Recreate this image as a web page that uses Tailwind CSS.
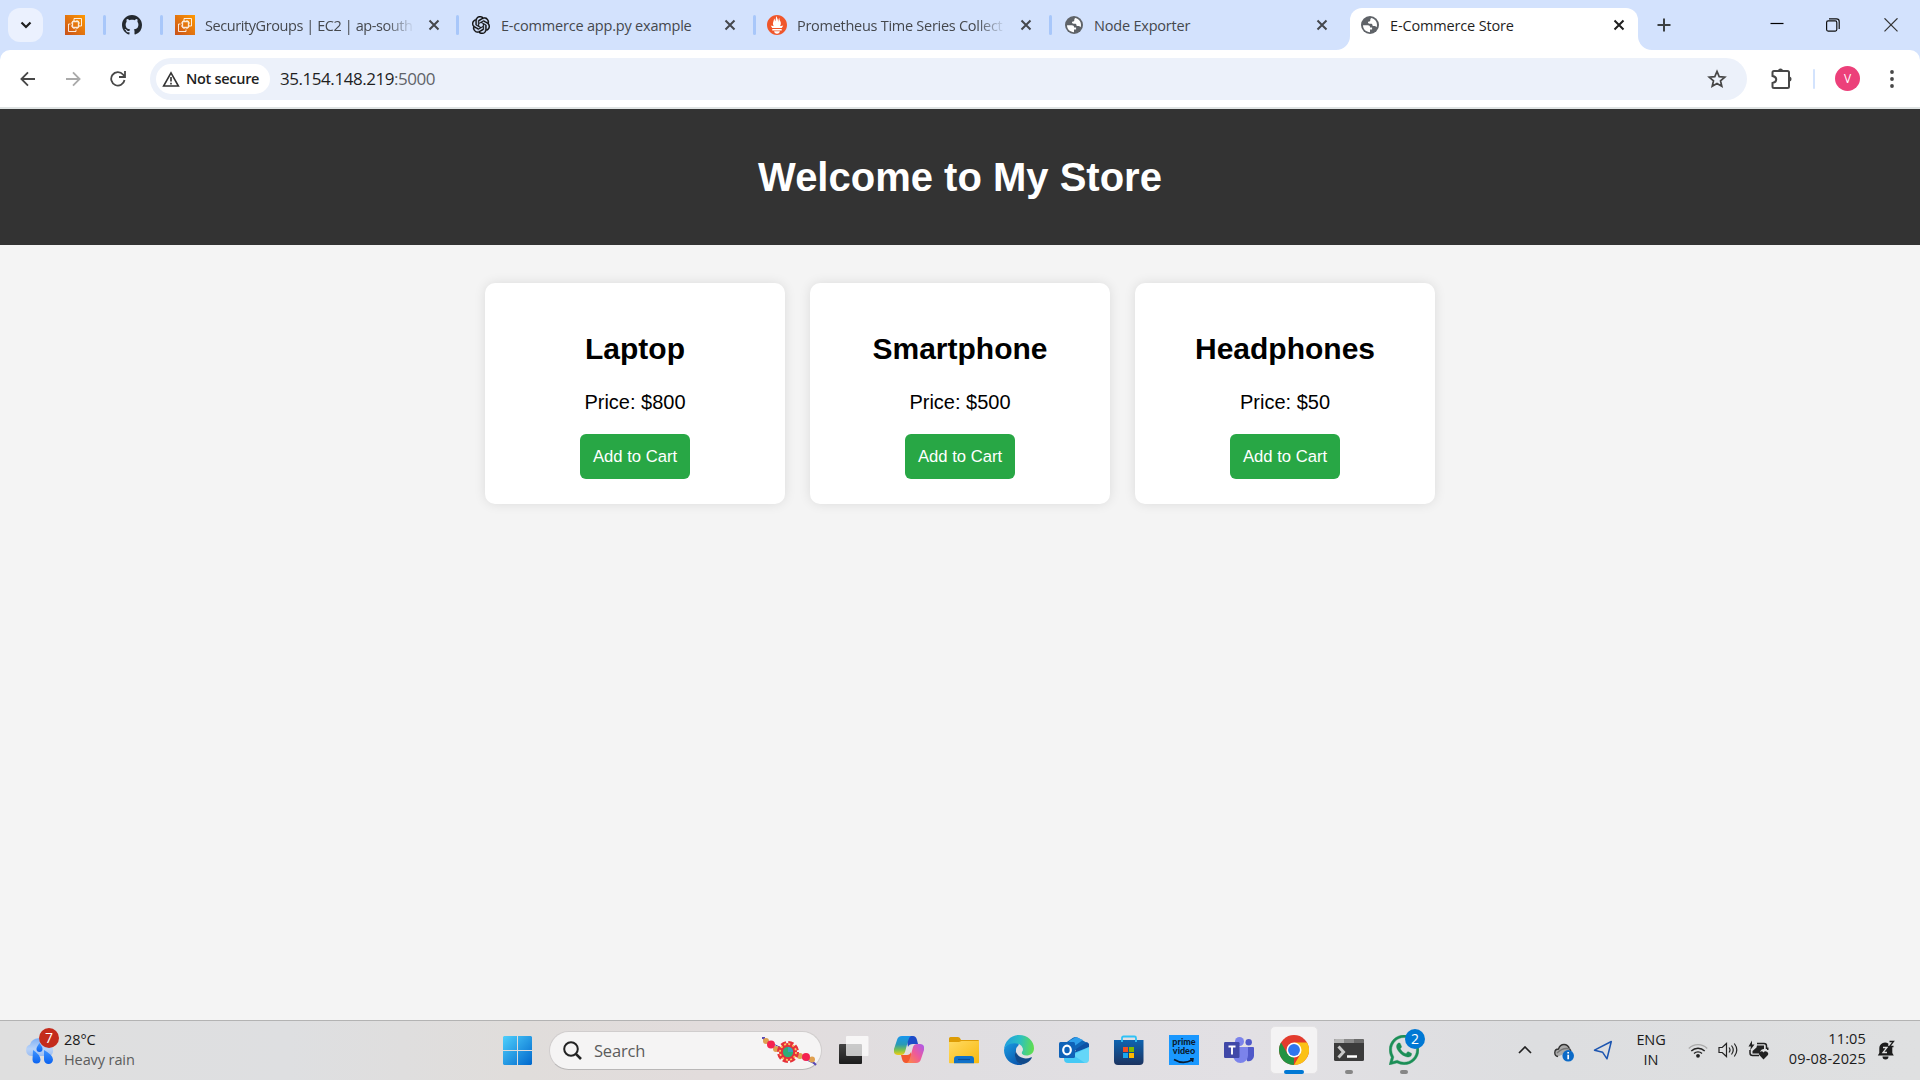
<!DOCTYPE html>
<html lang="en">
<head>
<meta charset="utf-8">
<title>E-Commerce Store</title>
<script src="https://cdn.jsdelivr.net/npm/@tailwindcss/browser@4"></script>
</head>
<body class="w-[1920px] h-[1080px] overflow-hidden flex flex-col bg-[#f4f4f4] font-['Open_Sans','Noto_Sans',sans-serif]">
<svg width="0" height="0" class="absolute">
  <defs>
    <linearGradient id="aws" x1="0" y1="1" x2="1" y2="0"><stop stop-color="#c8511b"/><stop offset="1" stop-color="#f90"/></linearGradient>
    <symbol id="ec2" viewBox="0 0 20 20"><path fill="url(#aws)" d="M0 0h20v20H0z"/><g fill="none" stroke="#fff" stroke-opacity=".85" stroke-width="1"><path d="M9 5.500V3.500h7.500v7.500h-2M5.500 9H3.500v7.500h7.500v-2"/><rect x="7.500" y="6.500" width="6" height="6" rx=".5" stroke-width="1.300"/><path d="M9 5v1M12 5v1M9 13v1M12 13v1M6 8h1M6 11h1M14 8h1M14 11h1"/></g></symbol>
    <symbol id="x" viewBox="0 0 12 12"><path d="M1.500 1.500l9 9M10.500 1.500l-9 9" stroke="currentColor" stroke-width="2" fill="none"/></symbol>
    <symbol id="globe" viewBox="0 0 18 18"><circle cx="9" cy="9" r="9" fill="#5f6368"/><path fill="#fff" d="M2 9.300h4.800c1.500 0 2.300.9 2.300 2.100h2v2.200H9v2.600c-3.900 0-7-3-7-6.900zM10 2.100c3.400.5 6 3.300 6 6.900 0 .9-.2 1.600-.5 2.300-.6-.9-1.300-1.200-2.300-1.200-1.400 0-1.900-.7-1.900-1.700 0-.5-.3-.7-.9-.7H8.500c-.9 0-1.500-.5-1.500-1.200s.6-1 1.200-1c1.300 0 1.100-1.300 1.100-2z"/></symbol>
  </defs>
</svg>

<!-- tab strip -->
<header class="h-[50px] shrink-0 bg-[#d3e2fd] flex text-[14.5px] tracking-[-0.2px] text-[#45484d]">
  <div class="w-[159px] shrink-0 flex items-center pl-2">
    <div class="w-[35px] h-[34px] rounded-xl bg-[#ebf1fe] flex items-center justify-center"><svg class="w-3 h-2" viewBox="0 0 12 8"><path d="M1.500 1.500L6 6l4.500-4.500" fill="none" stroke="#1f1f1f" stroke-width="2.200"/></svg></div>
    <svg class="w-5 h-5 ml-[22px]"><use href="#ec2"/></svg>
    <i class="w-[3px] h-5 rounded bg-[#a8c7fa] ml-[18px]"></i>
    <svg class="w-5 h-5 ml-4" viewBox="0 0 16 16" fill="#24292f"><path d="M8 0C3.580 0 0 3.580 0 8c0 3.540 2.290 6.530 5.470 7.590.4.070.55-.17.55-.38 0-.19-.01-.82-.01-1.490-2.010.37-2.530-.49-2.690-.94-.09-.23-.48-.94-.82-1.130-.28-.15-.68-.52-.01-.53.63-.01 1.080.58 1.230.82.72 1.210 1.870.87 2.330.66.070-.52.28-.87.51-1.070-1.780-.2-3.640-.89-3.640-3.950 0-.87.31-1.590.82-2.150-.08-.2-.36-1.020.08-2.120 0 0 .67-.21 2.200.82.64-.18 1.320-.27 2-.27s1.360.09 2 .27c1.530-1.040 2.200-.82 2.200-.82.44 1.100.16 1.920.08 2.120.51.56.82 1.270.82 2.150 0 3.070-1.870 3.750-3.650 3.950.29.25.54.73.54 1.480 0 1.070-.01 1.930-.01 2.200 0 .21.15.46.55.38A8.010 8.010 0 0 0 16 8c0-4.420-3.580-8-8-8z"/></svg>
  </div>
  <div class="w-[297px] shrink-0 flex items-center">
    <i class="w-[3px] h-5 rounded bg-[#a8c7fa] ml-px"></i>
    <svg class="w-5 h-5 ml-[12px]"><use href="#ec2"/></svg>
    <span class="ml-[10px] pt-0.5 w-[210px] whitespace-nowrap tracking-[-0.42px] [mask-image:linear-gradient(to_right,black_86%,transparent)]">SecurityGroups | EC2 | ap-south</span>
    <svg class="w-3 h-3 ml-[13px]"><use href="#x"/></svg>
  </div>
  <div class="w-[297px] shrink-0 flex items-center">
    <i class="w-[3px] h-5 rounded bg-[#a8c7fa]"></i>
    <svg class="w-[18px] h-[18px] ml-[13px]" viewBox="0 0 24 24" fill="#0d0d0d" stroke="#0d0d0d" stroke-width=".4"><path d="M22.2819 9.8211a5.9847 5.9847 0 0 0-.5157-4.9108 6.0462 6.0462 0 0 0-6.5098-2.9A6.0651 6.0651 0 0 0 4.9807 4.1818a5.9847 5.9847 0 0 0-3.9977 2.9 6.0462 6.0462 0 0 0 .7427 7.0966 5.98 5.98 0 0 0 .511 4.9107 6.051 6.051 0 0 0 6.5146 2.9001A5.9847 5.9847 0 0 0 13.2599 24a6.0557 6.0557 0 0 0 5.7718-4.2058 5.9894 5.9894 0 0 0 3.9977-2.9001 6.0557 6.0557 0 0 0-.7475-7.0729zm-9.022 12.6081a4.4755 4.4755 0 0 1-2.8764-1.0408l.1419-.0804 4.7783-2.7582a.7948.7948 0 0 0 .3927-.6813v-6.7369l2.02 1.1686a.071.071 0 0 1 .038.052v5.5826a4.504 4.504 0 0 1-4.4945 4.4944zm-9.6607-4.1254a4.4708 4.4708 0 0 1-.5346-3.0137l.142.0852 4.783 2.7582a.7712.7712 0 0 0 .7806 0l5.8428-3.3685v2.3324a.0804.0804 0 0 1-.0332.0615L9.74 19.9502a4.4992 4.4992 0 0 1-6.1408-1.6464zM2.3408 7.8956a4.485 4.485 0 0 1 2.3655-1.9728V11.6a.7664.7664 0 0 0 .3879.6765l5.8144 3.3543-2.0201 1.1685a.0757.0757 0 0 1-.071 0l-4.8303-2.7865A4.504 4.504 0 0 1 2.3408 7.872zm16.5963 3.8558L13.1038 8.364 15.1192 7.2a.0757.0757 0 0 1 .071 0l4.8303 2.7913a4.4944 4.4944 0 0 1-.6765 8.1042v-5.6772a.79.79 0 0 0-.407-.667zm2.0107-3.0231l-.142-.0852-4.7735-2.7818a.7759.7759 0 0 0-.7854 0L9.409 9.2297V6.8974a.0662.0662 0 0 1 .0284-.0615l4.8303-2.7866a4.4992 4.4992 0 0 1 6.6802 4.66zM8.3065 12.863l-2.02-1.1638a.0804.0804 0 0 1-.038-.0567V6.0742a4.4992 4.4992 0 0 1 7.3757-3.4537l-.142.0805L8.704 5.459a.7948.7948 0 0 0-.3927.6813zm1.0976-2.3654l2.602-1.4998 2.6069 1.4998v2.9994l-2.5974 1.4997-2.6067-1.4997Z"/></svg>
    <span class="ml-[11px] pt-0.5 w-[210px] whitespace-nowrap">E-commerce app.py example</span>
    <svg class="w-3 h-3 ml-[13px]"><use href="#x"/></svg>
  </div>
  <div class="w-[296px] shrink-0 flex items-center">
    <i class="w-[3px] h-5 rounded bg-[#a8c7fa]"></i>
    <svg class="w-5 h-5 ml-[11px]" viewBox="0 0 24 24"><circle cx="12" cy="12" r="11" fill="#fff"/><path fill="#f0562b" d="M12 0C5.373 0 0 5.372 0 12c0 6.627 5.373 12 12 12s12-5.373 12-12c0-6.628-5.373-12-12-12zm0 22.460c-1.885 0-3.414-1.260-3.414-2.814h6.828c0 1.553-1.528 2.813-3.414 2.813zm5.640-3.745H6.360v-2.046h11.280v2.046zm-.04-3.098H6.391c-.037-.043-.075-.086-.111-.13-1.155-1.401-1.427-2.133-1.690-2.879-.005-.025 1.400.287 2.395.511 0 0 .513.119 1.262.255-.72-.843-1.147-1.915-1.147-3.010 0-2.406 1.845-4.508 1.180-6.207.648.053 1.340 1.367 1.387 3.422.689-.951.977-2.690.977-3.755 0-1.103.727-2.385 1.454-2.429-.648 1.069.168 1.984.894 4.256.272.854.237 2.290.447 3.201.070-1.892.395-4.652 1.595-5.605-.529 1.200.079 2.702.494 3.424.671 1.164 1.078 2.047 1.078 3.716a4.642 4.642 0 01-1.110 2.996c.792-.149 1.340-.283 1.340-.283l2.573-.502s-.374 1.538-1.810 3.019z"/></svg>
    <span class="ml-[10px] pt-0.5 w-[209px] whitespace-nowrap tracking-[-0.27px] [mask-image:linear-gradient(to_right,black_86%,transparent)]">Prometheus Time Series Collect</span>
    <svg class="w-3 h-3 ml-[14px]"><use href="#x"/></svg>
  </div>
  <div class="w-[301px] shrink-0 flex items-center">
    <i class="w-[3px] h-5 rounded bg-[#a8c7fa]"></i>
    <svg class="w-[18px] h-[18px] ml-[13px]"><use href="#globe"/></svg>
    <span class="ml-[11px] pt-0.5 w-[208px]">Node Exporter</span>
    <svg class="w-3 h-3 ml-[14px]"><use href="#x"/></svg>
  </div>
  <div class="relative w-[288px] shrink-0 mt-2 h-[42px] pb-2 rounded-t-xl bg-white flex items-center text-[#1f1f1f]">
    <svg class="absolute -left-[14px] bottom-0 w-[14px] h-[14px]" viewBox="0 0 14 14"><path fill="#fff" d="M14 0v14H0A14 14 0 0 0 14 0z"/></svg>
    <svg class="absolute -right-[14px] bottom-0 w-[14px] h-[14px]" viewBox="0 0 14 14"><path fill="#fff" d="M0 0v14h14A14 14 0 0 1 0 0z"/></svg>
    <svg class="w-[18px] h-[18px] ml-[11px]"><use href="#globe"/></svg>
    <span class="ml-[11px] pt-0.5 w-[209px] tracking-[-0.15px]">E-Commerce Store</span>
    <svg class="w-3 h-3 ml-[14px]"><use href="#x"/></svg>
  </div>
  <div class="flex-1 flex items-center">
    <svg class="w-[14px] h-[14px] ml-[19px]" viewBox="0 0 14 14"><path d="M.5 7h13M7 .5v13" stroke="#3c4043" stroke-width="2"/></svg>
    <svg class="w-[14px] h-[14px] ml-[99px]" viewBox="0 0 14 14"><path d="M.5 5.500h13" stroke="#000" stroke-width="1.200"/></svg>
    <svg class="w-[14px] h-[14px] ml-[42px]" viewBox="0 0 14 14" fill="none" stroke="#111" stroke-width="1.200"><rect x=".6" y="2.900" width="10.200" height="10.200" rx="1.500"/><path d="M3 .8h7.500a2.700 2.700 0 0 1 2.700 2.700V11"/></svg>
    <svg class="w-[14px] h-[14px] ml-11" viewBox="0 0 14 14"><path d="M.5.3l13 13M13.500.3l-13 13" stroke="#333" stroke-width="1.200"/></svg>
  </div>
</header>

<!-- toolbar -->
<div class="h-[59px] shrink-0 bg-[#d3e2fd]">
 <div class="h-[59px] bg-white rounded-t-[10px] border-b-2 border-[#dfe3e3] flex items-center">
  <svg class="w-4 h-4 ml-5" viewBox="0 0 16 16" fill="none" stroke="#474747" stroke-width="1.800"><path d="M15 8H1.500M8 1.300L1.400 8 8 14.700"/></svg>
  <svg class="w-4 h-4 ml-[29px]" viewBox="0 0 16 16" fill="none" stroke="#aaa" stroke-width="1.800"><path d="M1 8h13.500M8 1.300L14.600 8 8 14.700"/></svg>
  <svg class="w-4 h-4 ml-[29px]" viewBox="0 0 16 16" fill="none" stroke="#474747" stroke-width="1.800"><path d="M14.500 9A6.700 6.700 0 1 1 13 3.500L14.500 5.300M15 0v6H9"/></svg>
  <div class="ml-[24px] w-[1597px] h-[42px] shrink-0 rounded-full bg-[#ecf1fa] flex items-center pl-1.5">
    <div class="w-[114px] h-[30px] rounded-full bg-white flex items-center pl-1.5">
      <svg class="w-[18px] h-[16px]" viewBox="0 0 18 16"><path d="M9 1.800L16.400 15H1.600z" fill="none" stroke="#333" stroke-width="1.600"/><path d="M9 6v4.500M9 11.800v1.600" stroke="#333" stroke-width="1.600"/></svg>
      <span class="ml-[6px] text-[14.500px] font-semibold tracking-[-0.3px] text-[#1f1f1f] whitespace-nowrap">Not secure</span>
    </div>
    <span class="ml-[10px] pt-px text-[17px] tracking-[-0.45px] text-[#1f1f1f]">35.154.148.219<span class="text-[#5f6368]">:5000</span></span>
    <svg class="w-[20px] h-[20px] ml-auto mr-[20px]" viewBox="0 0 20 20" fill="none" stroke="#474747" stroke-width="1.700"><path d="M10 2.400l2.200 5.200 5.600.5-4.300 3.700 1.300 5.500L10 14.400l-4.800 2.900 1.300-5.500L2.200 8.100l5.600-.5z"/></svg>
  </div>
  <svg class="w-[22px] h-[22px] ml-6 shrink-0" viewBox="0 0 22 22"><path d="M3 4h13.500q1.500 0 1.500 1.500V19.500q0 1.500-1.500 1.500H3q-1.500 0-1.500-1.500V16c5-1 5-6 0-7V5.500Q1.500 4 3 4z" fill="none" stroke="#474747" stroke-width="2" transform="translate(0 -1)"/><path d="M7 3a2.500 2.500 0 0 1 5 0zM18 8.500a2.500 2.500 0 0 1 0 5z" fill="#474747"/></svg>
  <i class="w-[2px] h-5 rounded bg-[#d3e3fd] ml-[20px]"></i>
  <div class="w-[25px] h-[25px] rounded-full bg-[#ec407a] text-white text-[12px] flex items-center justify-center ml-5">V</div>
  <svg class="w-1 h-[18px] ml-[30px]" viewBox="0 0 4 18" fill="#474747"><circle cx="2" cy="2" r="1.900"/><circle cx="2" cy="9" r="1.900"/><circle cx="2" cy="16" r="1.900"/></svg>
 </div>
</div>

<!-- page -->
<main class="flex-1 font-['Liberation_Sans',Arial,sans-serif] text-black">
  <div class="h-[136px] bg-[#333] flex items-center justify-center"><h1 class="text-[40px] font-bold text-white leading-[46px]">Welcome to My Store</h1></div>
  <div class="flex justify-center gap-[25px] pt-[38px] text-center">
    <section class="w-[300px] h-[221px] bg-white rounded-[10px] shadow-[0_0_12px_rgba(0,0,0,0.1)] pt-[49px] flex flex-col items-center">
      <h2 class="text-[30px] font-bold leading-[34px]">Laptop</h2><p class="text-[20px] leading-[23px] mt-[25px]">Price: $800</p>
      <button class="mt-[20px] w-[110px] h-[45px] rounded-[6px] bg-[#28a745] text-white text-[16.67px]">Add to Cart</button>
    </section>
    <section class="w-[300px] h-[221px] bg-white rounded-[10px] shadow-[0_0_12px_rgba(0,0,0,0.1)] pt-[49px] flex flex-col items-center">
      <h2 class="text-[30px] font-bold leading-[34px]">Smartphone</h2><p class="text-[20px] leading-[23px] mt-[25px]">Price: $500</p>
      <button class="mt-[20px] w-[110px] h-[45px] rounded-[6px] bg-[#28a745] text-white text-[16.67px]">Add to Cart</button>
    </section>
    <section class="w-[300px] h-[221px] bg-white rounded-[10px] shadow-[0_0_12px_rgba(0,0,0,0.1)] pt-[49px] flex flex-col items-center">
      <h2 class="text-[30px] font-bold leading-[34px]">Headphones</h2><p class="text-[20px] leading-[23px] mt-[25px]">Price: $50</p>
      <button class="mt-[20px] w-[110px] h-[45px] rounded-[6px] bg-[#28a745] text-white text-[16.67px]">Add to Cart</button>
    </section>
  </div>
</main>

<!-- taskbar -->
<footer class="h-[60px] shrink-0 border-t border-[#b3b3b3] bg-[linear-gradient(to_right,#dfdfdf,#dedfe1_15%,#e0dddb_27%,#e2dcdc_37%,#e0dee1_50%,#e2e0e4_65%,#dddee0_80%,#dfe0e1)] flex items-center text-[#1b1b1b]">
  <div class="w-[503px] shrink-0 flex items-center pl-[25px]">
    <div class="relative w-[30px] h-[30px]">
      <svg class="w-[30px] h-[30px]" viewBox="0 0 30 30"><defs><linearGradient id="cl" x1="0" y1="0" x2="0" y2="1"><stop stop-color="#7fb0f6"/><stop offset=".6" stop-color="#b9d3f8"/><stop offset="1" stop-color="#9cbdf0"/></linearGradient><linearGradient id="dr" x1="0" y1="0" x2="0" y2="1"><stop stop-color="#3f94ff"/><stop offset="1" stop-color="#0a62f0"/></linearGradient></defs><path fill="url(#cl)" d="M6 20a6 6 0 0 1-1-11.500A9 9 0 0 1 22 8a6.500 6.500 0 0 1 3 12z"/><g fill="url(#dr)"><path d="M14.500 7c2 3 3 4.500 3 6a3 3 0 0 1-6 0c0-1.500 1-3 3-6z"/><path d="M8 14q7.500 5 7.500 9.500a4 4 0 0 1-8 0zM19 14q9 5 9 9.500a4.300 4.300 0 0 1-9 0z"/></g></svg>
      <div class="absolute left-[14px] -top-[8px] w-5 h-5 rounded-full bg-[#c42b1c] text-white text-[14px] leading-5 text-center">7</div>
    </div>
    <div class="ml-[9px] -mt-0.5 text-[14.500px] leading-5 tracking-[-0.1px]"><div>28°C</div><div class="text-[#5c5c5c]">Heavy rain</div></div>
  </div>
  <svg class="w-[29px] h-[29px] shrink-0" viewBox="0 0 29 29"><defs><linearGradient id="wn" x1="0" y1="0" x2="1" y2="1" gradientUnits="userSpaceOnUse" gradientTransform="scale(29)"><stop stop-color="#4fd0fc"/><stop offset="1" stop-color="#0067cc"/></linearGradient></defs><path fill="url(#wn)" d="M1 0h13v14H0V1zM15 0h13l1 1v13H15zM0 15h14v14H1l-1-1zM15 15h14v13l-1 1H15z"/></svg>
  <div class="ml-[17px] w-[273px] h-[39px] shrink-0 rounded-full bg-[#f5f4f4] border border-[#d0cdcd] border-b-[#b9b7b7] flex items-center pl-[13px]">
    <svg class="w-[19px] h-[19px]" viewBox="0 0 19 19" fill="none" stroke="#222" stroke-width="2"><circle cx="8" cy="8" r="6.800"/><path d="M12.800 12.800L18 18" stroke-width="2.600"/></svg>
    <span class="ml-[12px] pt-px text-[16.500px] tracking-[-0.2px] text-[#5c5c5c]">Search</span>
    <svg class="w-[56px] h-[30px] ml-auto mr-[4px]" viewBox="0 0 56 30"><path d="M2 3L54 28" stroke="#5b4bb5" stroke-width="1"/><path d="M1 2h3M52 26l3 3" stroke="#5b4bb5" stroke-width="2"/><g fill="#e0a050"><circle cx="5" cy="5" r="3"/><circle cx="15" cy="13" r="3"/><circle cx="39" cy="20" r="3"/><circle cx="51" cy="23.500" r="3"/></g><circle cx="10" cy="8.500" r="4" fill="#f4224f"/><circle cx="45" cy="21" r="4" fill="#f4224f"/><circle cx="27" cy="16" r="9" fill="#e6303a" stroke="#e6303a" stroke-width="4" stroke-dasharray="5 2.070"/><circle cx="27" cy="16" r="8" fill="none" stroke="#ffc45c" stroke-width="1.800" stroke-dasharray="2 2.190"/><circle cx="27" cy="16" r="5.200" fill="#2fae78"/><path d="M27 11a5 5 0 0 1 5 5h-5z" fill="#3c9fc0"/></svg>
  </div>
  <div class="ml-[17px] flex items-center gap-[25px] shrink-0 -mt-px">
    <svg class="w-[30px] h-[30px]" viewBox="0 0 30 30"><defs><linearGradient id="tv" x1="0" y1="0" x2="0" y2="1"><stop stop-color="#444"/><stop offset="1" stop-color="#1c1c1c"/></linearGradient></defs><rect x="0" y="9" width="23" height="20" rx="1" fill="url(#tv)"/><rect x="7" y="1" width="22.500" height="20" rx="1" fill="#fff" fill-opacity=".72"/></svg>
    <svg class="w-[30px] h-[30px]" viewBox="0 0 30 30"><defs><linearGradient id="ca" x1="0" y1="0" x2="0" y2="1"><stop stop-color="#1796f0"/><stop offset=".45" stop-color="#2a9ab5"/><stop offset=".75" stop-color="#7fc24a"/><stop offset="1" stop-color="#f5cb14"/></linearGradient><linearGradient id="cb" x1="1" y1="0" x2="0" y2="1"><stop stop-color="#a85af0"/><stop offset=".5" stop-color="#ee5a9a"/><stop offset="1" stop-color="#ff8c3c"/></linearGradient></defs><path fill="#1d4bc8" d="M12 1h7q3 0 4 4l1 4h-5q-4 0-5 3z"/><path fill="#f3582f" d="M18 28h-6q-3 0-4-4l-1-4h6q3 0 4-3z"/><path fill="url(#ca)" d="M8 1h9q-2 1-3 5l-3 11q-1 3-4 3H4q-5 0-4-6l3-9q1-4 5-4z"/><path fill="url(#cb)" d="M22 28h-9q2-1 3-5l3-11q1-3 4-3h3q5 0 4 6l-3 9q-1 4-5 4z"/></svg>
    <svg class="w-[30px] h-[30px]" viewBox="0 0 30 30"><defs><linearGradient id="fd" x1="0" y1="0" x2="1" y2="1"><stop stop-color="#ffda62"/><stop offset="1" stop-color="#f8b90e"/></linearGradient></defs><path fill="#dd9c05" d="M0 3.500Q0 2 1.500 2H9q2 0 3 3h17q1 0 1 1v6H0z"/><path fill="url(#fd)" d="M0 7h10l2.500-1H30v21.500q0 .8-.8.8H.8q-.8 0-.8-.8z"/><path fill="#1071c9" d="M5 28.300V24q0-3 3-3h14q3 0 3 3v4.300z"/><path d="M9 24.500h12" stroke="#0b4f96" stroke-width="1.200"/></svg>
    <svg class="w-[30px] h-[30px]" viewBox="0 0 24 24"><defs><linearGradient id="e1" x1="0" y1=".4" x2="1" y2=".5"><stop stop-color="#1f9de0"/><stop offset=".5" stop-color="#2bbfc4"/><stop offset="1" stop-color="#61de4d"/></linearGradient><linearGradient id="e2" x1="0" y1="0" x2=".7" y2="1"><stop stop-color="#1b9de2"/><stop offset="1" stop-color="#0a57ae"/></linearGradient></defs><path fill="url(#e2)" d="M12 7C6 4.500 1 7.500 0 12c0 7 5.500 12 12 12 1 0 2-.1 3-.4C10 22 8 17 9.500 13z"/><path fill="#114a8b" d="M9.500 12.500C7 18 11 24 15.500 23.400c3-.7 5.300-2.500 6.700-5 .3-.6-.2-.8-.8-.5-5 2.300-11.200-.2-11.900-5.400z"/><path fill="url(#e1)" d="M0 12C.3 5.300 5.500 0 12 0c7 0 12 5 12 10.500 0 4-3 5.800-6 5.800-2.500 0-4-1-4-2 0-.8 1-1.200 1-3C15 8.500 12 6.500 8.500 6.500 4 6.500.5 9 0 12z"/><path fill="#e2e0e4" d="M12 8.900c2 .2 3 1.500 3 2.700 0 1.300-.9 1.800-.9 2.700 0 .8.8 1.400 1.800 1.800-4 .3-6.300-1.500-6.300-4 0-1.800.9-3.100 2.400-3.200z"/></svg>
    <svg class="w-[30px] h-[30px]" viewBox="0 0 30 30"><path fill="#1066b8" d="M5 9l9-6.200q2.500-1.600 5 0L30 9v6H5z"/><path fill="#2e9eea" d="M10 6l7-4L24 5 14 12z"/><path fill="#0f52a5" d="M17 14L28 7l2 2v5L14 22z"/><path fill="#45c9f5" d="M5 18h10L30 12v12q0 4-4 4H9q-4 0-4-4z"/><path fill="#83e4fc" d="M14 20L30 12v12q0 4-4 4z" opacity=".5"/><rect y="7" width="16" height="16" rx="1.500" fill="#0f62b8"/><ellipse cx="8" cy="15" rx="3.800" ry="4.300" fill="none" stroke="#fff" stroke-width="2.200"/></svg>
    <svg class="w-[30px] h-[30px]" viewBox="0 0 30 30"><defs><linearGradient id="st" x1="0" y1="0" x2="0" y2="1"><stop stop-color="#0e63b0"/><stop offset="1" stop-color="#1c3461"/></linearGradient></defs><path fill="url(#st)" d="M0 5h29.500V26q0 4-4 4H4q-4 0-4-4z"/><path d="M8 7V3q0-1.500 1.500-1.500h11Q22 1.500 22 3v4" fill="none" stroke="#2fc2f6" stroke-width="1.800"/><path fill="#f25022" d="M9 12h5v5H9z"/><path fill="#7fba00" d="M15 12h5v5h-5z"/><path fill="#19a7f0" d="M9 18h5v5H9z"/><path fill="#ffb900" d="M15 18h5v5h-5z"/></svg>
    <div class="w-[30px] h-[30px] bg-[#1a98ff] text-[#0a1c30] font-['Lato'] text-[9px] font-black text-center pt-[2px] flex flex-col items-center"><span class="h-[9px] leading-[9px]">prime</span><span class="h-[9px] leading-[9px]">video</span><svg class="w-[22px] h-[6px] mt-[3px]" viewBox="0 0 22 6"><path d="M1 1.500q9 5.500 18 .5M17 .8h3l-.5 3" fill="none" stroke="#0a1c30" stroke-width="1.500"/></svg></div>
    <svg class="w-[30px] h-[30px]" viewBox="0 0 30 30"><circle cx="15.500" cy="6.500" r="4.500" fill="#7b83eb"/><circle cx="24.700" cy="7.300" r="3.200" fill="#5059c9"/><path fill="#5059c9" d="M19 12h10q1 0 1 1v8a5.500 5.500 0 0 1-7 5z"/><path fill="#7b83eb" d="M9 12h15v8.500a7.500 7.500 0 0 1-15 0z"/><rect y="7" width="15.500" height="16" rx="1.200" fill="#4048a8"/><path d="M4.500 11.500h7M8 11.500v8" stroke="#fff" stroke-width="1.900"/></svg>
    <div class="relative w-[30px] h-[30px]">
      <div class="absolute -left-[9px] -top-[9px] w-12 h-12 rounded-[5px] bg-[#f4f3f4] border border-[#e5e3e5]"></div>
      <svg class="relative w-[30px] h-[30px]" viewBox="0 0 48 48"><circle cx="24" cy="24" r="24" fill="#e33b2e"/><path fill="#229342" d="M3.200 12L13.600 30 24 36l-.2 12A24 24 0 0 1 3.200 12z"/><path fill="#fbc116" d="M24 12h20.800A24 24 0 0 1 24 48l10.400-18z"/><circle cx="24" cy="24" r="12" fill="#fff"/><circle cx="24" cy="24" r="9.500" fill="#2f76f0"/></svg>
      <i class="absolute left-[5px] top-[35px] w-5 h-1 rounded-full bg-[#0078d4]"></i>
    </div>
    <div class="relative w-[30px] h-[30px]">
      <svg class="w-[30px] h-[30px]" viewBox="0 0 30 30"><rect y="4" width="30" height="22" rx="1.500" fill="#3b3b3b"/><path fill="#b5b5b5" d="M1.500 4H10v4H0V5.500Q0 4 1.500 4z"/><path fill="#8a8a8a" d="M10 4h10v4H10z"/><path fill="#6a6a6a" d="M20 4h8.500Q30 4 30 5.500V8H20z"/><path d="M4.500 11.500l5 5.500-5 5.500" fill="none" stroke="#c8c8c8" stroke-width="3"/><path d="M13 21.500h10" stroke="#fff" stroke-width="2.500"/></svg>
      <i class="absolute left-[11px] top-[35px] w-2 h-1 rounded-full bg-[#868686]"></i>
    </div>
    <div class="relative w-[30px] h-[30px]">
      <svg class="w-[30px] h-[30px]" viewBox="0 0 24 24" fill="#1c8f57" stroke="#1c8f57" stroke-width=".3"><path d="M17.472 14.382c-.297-.149-1.758-.867-2.030-.967-.273-.099-.471-.148-.67.15-.197.297-.767.966-.94 1.164-.173.199-.347.223-.644.075-.297-.15-1.255-.463-2.390-1.475-.883-.788-1.480-1.761-1.653-2.059-.173-.297-.018-.458.13-.606.134-.133.298-.347.446-.52.149-.174.198-.298.298-.497.099-.198.050-.371-.025-.52-.075-.149-.669-1.612-.916-2.207-.242-.579-.487-.5-.669-.51-.173-.008-.371-.01-.57-.01-.198 0-.52.074-.792.372-.272.297-1.040 1.016-1.040 2.479 0 1.462 1.065 2.875 1.213 3.074.149.198 2.096 3.200 5.077 4.487.709.306 1.262.489 1.694.625.712.227 1.360.195 1.871.118.571-.085 1.758-.719 2.006-1.413.248-.694.248-1.289.173-1.413-.074-.124-.272-.198-.57-.347m-5.421 7.403h-.004a9.870 9.870 0 01-5.031-1.378l-.361-.214-3.741.982.998-3.648-.235-.374a9.860 9.860 0 01-1.510-5.260c.001-5.450 4.436-9.884 9.888-9.884 2.640 0 5.122 1.030 6.988 2.898a9.825 9.825 0 012.893 6.994c-.003 5.450-4.437 9.884-9.885 9.884m8.413-18.297A11.815 11.815 0 0012.050 0C5.495 0 .16 5.335.157 11.892c0 2.096.547 4.142 1.588 5.945L.057 24l6.305-1.654a11.882 11.882 0 005.683 1.448h.005c6.554 0 11.890-5.335 11.893-11.893a11.821 11.821 0 00-3.480-8.413z"/></svg>
      <div class="absolute left-4 -top-[6px] w-5 h-5 rounded-full bg-[#0078d4] text-white text-[14px] leading-5 text-center">2</div>
      <i class="absolute left-[11px] top-[35px] w-2 h-1 rounded-full bg-[#868686]"></i>
    </div>
  </div>
  <div class="ml-auto flex items-center pr-[25px] shrink-0 -mt-px">
    <svg class="w-[14px] h-2" viewBox="0 0 14 8"><path d="M1 7l6-6 6 6" fill="none" stroke="#222" stroke-width="1.700"/></svg>
    <svg class="w-5 h-5 ml-[22px] mt-[3px]" viewBox="0 0 20 20"><path d="M4 14.500Q.7 14 .8 10.500 1 7 4.500 7 6 2.500 10 2.500t5.500 4.500L17 9" fill="#a9a9a9" stroke="#333" stroke-width="1.400"/><path d="M3 11Q9 5 16 7" stroke="#777" stroke-width="1.300" fill="none"/><circle cx="14.200" cy="13.800" r="5.800" fill="#0b6ac7"/><path d="M14.200 10v1.600M14.200 12.700v4.500" stroke="#fff" stroke-width="1.700"/></svg>
    <svg class="w-5 h-5 ml-[19px]" viewBox="0 0 20 20"><path d="M18.300 1.500L14 18.800 9.700 12.300 1.500 10.200z" fill="none" stroke="#1c55b0" stroke-width="1.500" stroke-linejoin="round"/></svg>
    <div class="w-9 ml-[20px] text-[14.500px] leading-5 text-center tracking-[-0.1px]">ENG<br>IN</div>
    <svg class="w-5 h-[15px] ml-[19px]" viewBox="0 0 20 15" fill="none" stroke-width="1.300"><path d="M.8 5.500a13 13 0 0 1 18.400 0" stroke="#aaa"/><g stroke="#222"><path d="M3.300 8a9.500 9.500 0 0 1 13.400 0M6 10.500a5.700 5.700 0 0 1 8 0"/></g><circle cx="10" cy="12.800" r="1.900" fill="#222"/></svg>
    <svg class="w-[21px] h-4 ml-[10px]" viewBox="0 0 21 16" fill="none" stroke="#222" stroke-width="1.200"><path d="M1 5.500h3.200L8.500 1.500v13L4.200 10.500H1zM11 5.500q2 2.500 0 5M13.500 3.500q3.500 4.500 0 9M16.300 1.500q5 6.500 0 13"/></svg>
    <svg class="w-[21px] h-5 ml-[9px]" viewBox="0 0 21 20"><path d="M9 3.500h7q2.500 0 2.500 2.500v3M2 10v3q0 2.500 2.500 2.500H11" fill="none" stroke="#222" stroke-width="1.500"/><path fill="#222" d="M9 5.500h7V9q-3 0-4 3v1.500H4.500V11l4-3.500zM4 .5L.5 6.500H3L2 10.500l4.500-6H4zM15.500 19.500l-4-4.200a2.400 2.400 0 0 1 4-2.800 2.400 2.400 0 0 1 4.200 2.800zM19 7.500h1.500v2.500H19z"/></svg>
    <div class="w-[90px] ml-[7px] -mt-0.5 text-[14.500px] leading-5 text-right tracking-[0.15px] whitespace-nowrap">11:05<br>09-08-2025</div>
    <svg class="w-[18px] h-5 ml-[11px]" viewBox="0 0 18 20"><path fill="#1c1c1c" d="M2.300 8.500a5.800 5.800 0 0 1 9-5V6h4v7l1.500 2.500H.8L2.300 13zM5.500 16.500h6a3 3 0 0 1-6 0z"/><path d="M6 7.500h4L6 12.500h4" fill="none" stroke="#e0e0e0" stroke-width="1.300"/><path d="M12.500 1.500h4l-4 5h4" fill="none" stroke="#1c1c1c" stroke-width="1.300"/></svg>
  </div>
</footer>
</body>
</html>
